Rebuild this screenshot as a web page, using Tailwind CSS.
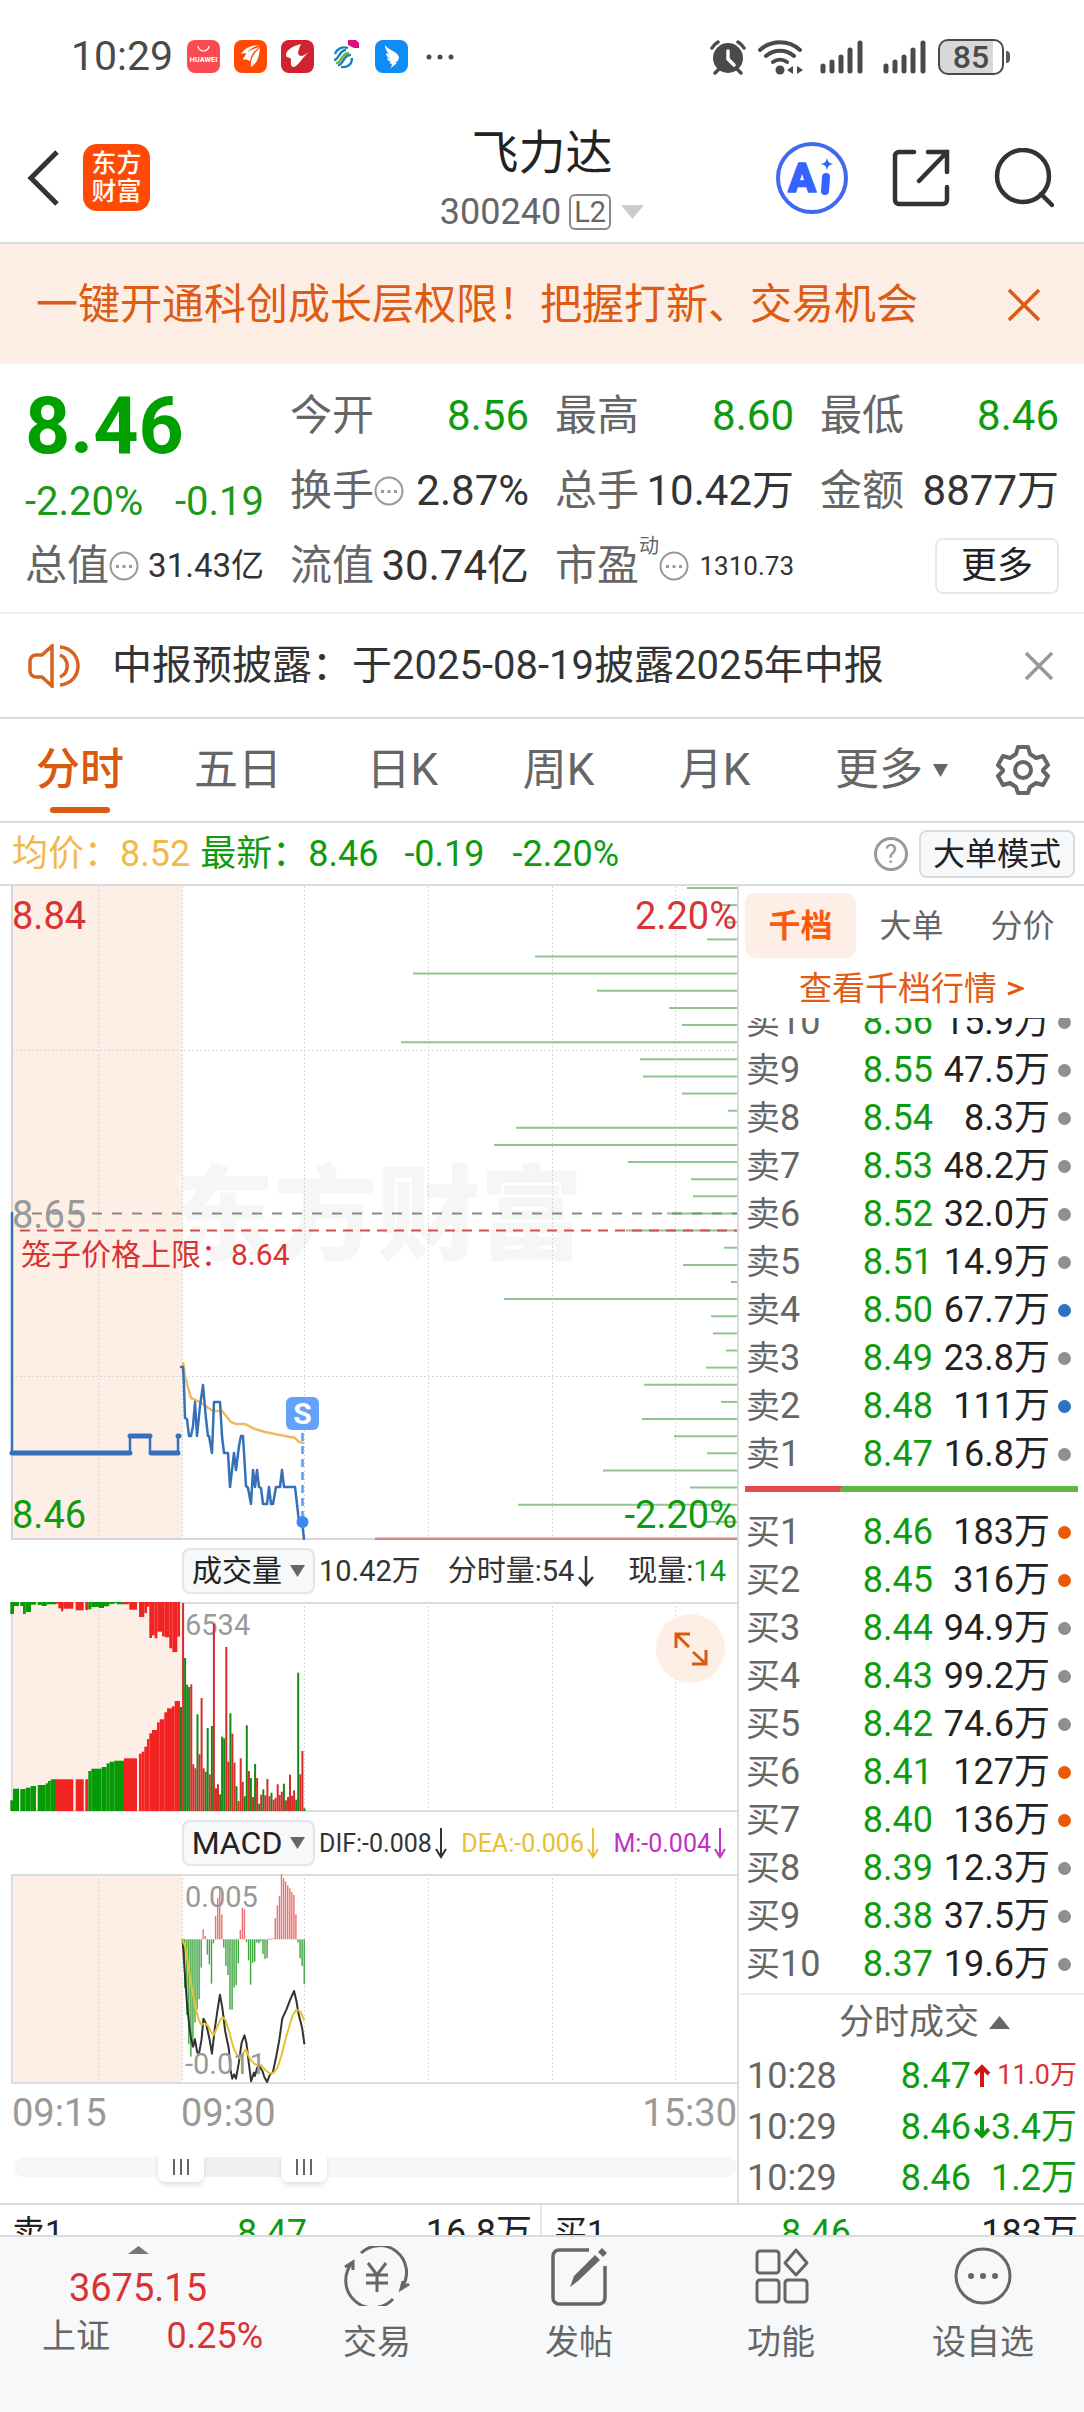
<!DOCTYPE html>
<html lang="zh-CN">
<head>
  <meta charset="UTF-8" />
  <meta name="viewport" content="width=device-width, initial-scale=1" />
  <title>飞力达 300240</title>
  <script src="https://cdn.jsdelivr.net/npm/@tailwindcss/browser@4"></script>
  <style>
    body { font-family: Roboto, 'Noto Sans CJK SC', sans-serif; }
  </style>
</head>
<body class="bg-white text-[#222] leading-none">

  <!-- Status bar -->
  <div class="h-[113px] pl-[71px] pr-[74px] flex items-center justify-between text-[#4a4a4a]">
    <div class="flex items-center gap-[14px]">
      <span class="text-[41px]">10:29</span>
      <svg class="w-[33px] h-[33px]" viewBox="0 0 33 33">
        <rect width="33" height="33" rx="8" fill="#fc4a52" />
        <path d="M11 6a5.500 5 0 0 0 11 0" fill="none" stroke="#fff" stroke-width="1.200" />
        <text x="16.500" y="22" font-size="7.500" font-weight="700" text-anchor="middle" fill="#fff">HUAWEI</text>
      </svg>
      <svg class="w-[33px] h-[33px]" viewBox="0 0 33 33">
        <rect width="33" height="33" rx="8" fill="#ff4a05" />
        <path d="M7 14c4-6 11-9 20-9-7 1-12 4-14 9-2-1-4-1-6 0zM9 20c2-7 8-11 17-13-5 3-9 7-10 14-2-1-5-2-7-1zM17 27c-1-8 3-14 9-19-1 6-1 14-9 19z" fill="#fff" />
      </svg>
      <svg class="w-[33px] h-[33px]" viewBox="0 0 33 33">
        <rect width="33" height="33" rx="8" fill="#d0222f" />
        <path d="M20 4C11 6 4 11 5 16c1 2 4 1 5 3 0 3-1 8 3 8 5-2 7-8 15-15-3 2-8 6-10 3-2-2 0-6 2-11z" fill="#fff" />
      </svg>
      <svg class="w-[33px] h-[33px]" viewBox="0 0 33 33">
        <g fill="none" stroke-width="2.400">
          <path d="M6 20c5 0 5-10 12-10M10 25c6 0 5-11 13-10" stroke="#1d7fc4" />
          <path d="M8 23c6 0 5-10 13-10" stroke="#6cb52d" />
          <path d="M7 14c2-5 7-8 13-6M24 18c0 6-4 10-11 9" stroke="#1d7fc4" />
        </g>
        <path d="M20 0h8l3 3v5h-5l-6-3z" fill="#d8127d" />
      </svg>
      <svg class="w-[33px] h-[33px]" viewBox="0 0 33 33">
        <rect width="33" height="33" rx="8" fill="#0f8df5" />
        <path d="M10 5c3 5 12 6 14 12 0 3-2 5-4 6h2l-6 5 1-4-3-1 2-1c-3-1-4-3-4-4l3 1c-3-2-4-4-4-6l3 1c-3-3-4-6-4-9z" fill="#fff" />
      </svg>
      <svg class="w-[28px] h-[6px] ml-[4px]" viewBox="0 0 28 6" fill="#4a4a4a"><circle cx="3" cy="3" r="2.500" /><circle cx="14" cy="3" r="2.500" /><circle cx="25" cy="3" r="2.500" /></svg>
    </div>
    <div class="flex items-center gap-[12px]">
      <svg class="w-[36px] h-[36px]" viewBox="0 0 36 36">
        <circle cx="18" cy="19" r="15" fill="#4a4a4a" />
        <path d="M2 9a16 16 0 0 1 6-6M34 9a16 16 0 0 0-6-6M5 34l4-4M31 34l-4-4" stroke="#4a4a4a" stroke-width="3.500" fill="none" stroke-linecap="round" />
        <path d="M18 12v8l6 6" stroke="#fff" stroke-width="3.500" fill="none" stroke-linecap="round" />
      </svg>
      <svg class="w-[46px] h-[36px]" viewBox="0 0 46 36">
        <g fill="none" stroke="#4a4a4a" stroke-width="4" stroke-linecap="round">
          <path d="M2 11a30 30 0 0 1 40 0M8 17a21 21 0 0 1 28 0M15 23a12 12 0 0 1 14 0" />
        </g>
        <circle cx="22" cy="31" r="4.500" fill="#4a4a4a" />
        <path d="M29 31l6-4v8zM45 31l-6-4v8z" fill="#4a4a4a" />
      </svg>
      <svg class="w-[43px] h-[34px] ml-[4px]" viewBox="0 0 43 34" stroke="#4a4a4a" stroke-width="5" stroke-linecap="round"><path d="M3 26v5M12 22v9M21 17v14M30 10v21M40 3v28" /></svg>
      <svg class="w-[43px] h-[34px] ml-[8px]" viewBox="0 0 43 34" stroke="#4a4a4a" stroke-width="5" stroke-linecap="round"><path d="M3 26v5M12 22v9M21 17v14M30 10v21M40 3v28" /></svg>
      <div class="flex items-center gap-[2px]">
        <span class="w-[66px] h-[36px] rounded-[10px] border-[2px] border-[#4a4a4a] bg-[linear-gradient(90deg,#d8d8d8_85%,#fff_85%)] flex items-center justify-center text-[32px] font-medium">85</span>
        <span class="w-[4px] h-[12px] rounded-r bg-[#5a5a5a]"></span>
      </div>
    </div>
  </div>

  <!-- Header -->
  <header class="relative h-[131px] border-b-2 border-[#d9dbdd] pl-[26px] pr-[30px] flex items-center justify-between">
    <div class="flex items-center gap-[24px]">
      <a href="#" aria-label="返回">
        <svg class="w-[33px] h-[58px]" viewBox="0 0 33 58" fill="none" stroke="#333" stroke-width="5"><path d="M31 3L5 29l26 26" /></svg>
      </a>
      <a href="#" class="w-[67px] h-[67px] rounded-[14px] bg-[#ff4a05] text-white text-[25px] leading-[28px] font-medium flex items-center justify-center text-center">东方<br />财富</a>
    </div>
    <div class="absolute inset-x-0 top-[10px] mx-auto w-[220px] flex flex-col items-center">
      <h1 class="text-[47px] leading-[60px] text-[#222]">飞力达</h1>
      <button class="mt-[10px] flex items-center text-[36px] leading-[38px] text-[#666]">
        300240
        <span class="ml-[8px] h-[36px] px-[3px] border-2 border-[#888] rounded-[6px] text-[29px] leading-[32px]">L2</span>
        <svg class="ml-[10px] w-[23px] h-[14px]" viewBox="0 0 23 14"><path d="M0 0h23L11.500 14z" fill="#ccc" /></svg>
      </button>
    </div>
    <div class="flex items-center gap-[44px]">
      <button aria-label="AI">
        <svg class="w-[72px] h-[72px]" viewBox="0 0 72 72">
          <circle cx="36" cy="36" r="34" fill="none" stroke="#4169ee" stroke-width="4" />
          <text x="12" y="50" font-size="41" font-weight="900" fill="#3463ff" stroke="#3463ff" stroke-width="1.500" stroke-linejoin="round">A</text>
          <path d="M50 35l-1 14" stroke="#3463ff" stroke-width="8" stroke-linecap="round" />
          <path d="M51 16c1 4 2 5 6 6-4 1-5 2-6 6-1-4-2-5-6-6 4-1 5-2 6-6z" fill="#3463ff" />
        </svg>
      </button>
      <button aria-label="分享">
        <svg class="w-[58px] h-[58px]" viewBox="0 0 58 58" fill="none" stroke="#333" stroke-width="4.500" stroke-linecap="round"><path d="M22 3H7a4 4 0 0 0-4 4v44a4 4 0 0 0 4 4h44a4 4 0 0 0 4-4V38M36 3h19v20M55 3L27 32" /></svg>
      </button>
      <button aria-label="搜索">
        <svg class="w-[60px] h-[60px]" viewBox="0 0 60 60" fill="none" stroke="#333" stroke-width="4.500" stroke-linecap="round"><circle cx="29" cy="28" r="26" /><path d="M47 46l11 11" /></svg>
      </button>
    </div>
  </header>

  <!-- Promo banner -->
  <div class="h-[120px] pt-[2px] bg-[#fceee5] pl-[36px] pr-[43px] flex items-center justify-between text-[#dd5b12]">
    <a href="#" class="text-[42px]">一键开通科创成长层权限！把握打新、交易机会</a>
    <button aria-label="关闭"><svg class="w-[34px] h-[34px]" viewBox="0 0 34 34" stroke="#dd5b12" stroke-width="3.500"><path d="M2 2l30 30M32 2L2 32" /></svg></button>
  </div>

  <!-- Quote -->
  <section class="h-[250px] pt-[14px] px-[25px] border-b-2 border-[#ededee] grid grid-cols-4 auto-rows-[75px] gap-x-[26px] text-[42px] text-[#666]">
    <div class="row-span-2 text-[#00a000]">
      <div class="h-[96px] flex items-center text-[79px] font-bold">8.46</div>
      <div class="h-[56px] flex items-center justify-between text-[40px] text-[#1a991a]"><span>-2.20%</span><span>-0.19</span></div>
    </div>
    <div class="flex items-center justify-between">今开<span class="text-[#0f9b0f]">8.56</span></div>
    <div class="flex items-center justify-between">最高<span class="text-[#0f9b0f]">8.60</span></div>
    <div class="flex items-center justify-between">最低<span class="text-[#0f9b0f]">8.46</span></div>
    <div class="flex items-center">换手
      <svg class="w-[30px] h-[30px]" viewBox="0 0 30 30"><circle cx="15" cy="15" r="13.500" fill="none" stroke="#999" stroke-width="2" /><path d="M7 14h3v3H7zM13.500 14h3v3h-3zM20 14h3v3h-3z" fill="#999" /></svg>
      <span class="ml-auto text-[#333]">2.87%</span></div>
    <div class="flex items-center justify-between">总手<span class="text-[#333]">10.42万</span></div>
    <div class="flex items-center justify-between">金额<span class="text-[#333]">8877万</span></div>
    <div class="flex items-center">总值
      <svg class="w-[30px] h-[30px]" viewBox="0 0 30 30"><circle cx="15" cy="15" r="13.500" fill="none" stroke="#999" stroke-width="2" /><path d="M7 14h3v3H7zM13.500 14h3v3h-3zM20 14h3v3h-3z" fill="#999" /></svg>
      <span class="ml-auto text-[33px] text-[#333]">31.43亿</span></div>
    <div class="flex items-center justify-between">流值<span class="text-[#333]">30.74亿</span></div>
    <div class="flex items-center">市盈<span class="self-start mt-[8px] text-[20px]">动</span>
      <svg class="w-[30px] h-[30px]" viewBox="0 0 30 30"><circle cx="15" cy="15" r="13.500" fill="none" stroke="#999" stroke-width="2" /><path d="M7 14h3v3H7zM13.500 14h3v3h-3zM20 14h3v3h-3z" fill="#999" /></svg>
      <span class="ml-auto text-[26px] text-[#333]">1310.73</span></div>
    <div class="flex items-center justify-end">
      <button class="w-[124px] h-[56px] border-2 border-[#e8e8ea] rounded-[8px] text-[36px] text-[#222]">更多</button>
    </div>
  </section>

  <!-- Notice -->
  <div class="h-[105px] border-b-2 border-[#d9dbdd] pl-[28px] pr-[30px] flex items-center text-[40px] text-[#333]">
    <svg class="w-[53px] h-[44px]" viewBox="0 0 53 44" fill="none" stroke="#d8631f" stroke-width="3.500"><path d="M2 17a6 6 0 0 1 6-6h6L24 2v40L14 33H8a6 6 0 0 1-6-6zM32 11a12 12 0 0 1 0 22M32 3c11 1 18 9 18 19s-7 18-18 19" /></svg>
    <a href="#" class="ml-[31px]">中报预披露：于2025-08-19披露2025年中报</a>
    <button aria-label="关闭" class="ml-auto"><svg class="w-[30px] h-[30px]" viewBox="0 0 30 30" stroke="#999" stroke-width="3.500"><path d="M2 2l26 26M28 2L2 28" /></svg></button>
  </div>

  <!-- Period tabs -->
  <nav class="h-[104px] border-b-2 border-[#d9dbdd] pl-[36px] pr-[34px] flex items-center text-[44px] text-[#666]">
    <button class="relative h-full text-[#d9590f] font-medium">分时<span class="absolute bottom-[8px] left-[14px] w-[60px] h-[6px] rounded-full bg-[#d9590f]"></span></button>
    <div class="flex-1 ml-[70px] flex items-center justify-between">
      <button>五日</button>
      <button>日K</button>
      <button>周K</button>
      <button>月K</button>
      <button class="flex items-center">更多<svg class="ml-[10px] w-[15px] h-[13px]" viewBox="0 0 15 13"><path d="M0 0h15L7.500 13z" fill="#666" /></svg></button>
    </div>
    <button aria-label="设置" class="ml-[48px]">
      <svg class="w-[54px] h-[52px]" viewBox="0 0 54 52" fill="none" stroke="#666" stroke-width="4" stroke-linejoin="round"><path d="M22 3h10l2 7 6 4 7-2 5 9-5 5 0 1 5 5-5 9-7-2-6 4-2 6H22l-2-6-6-4-7 2-5-9 5-5 0-1-5-5 5-9 7 2 6-4z" /><circle cx="27" cy="26" r="8" /></svg>
    </button>
  </nav>

  <!-- Latest price line -->
  <div class="h-[63px] border-b-2 border-[#d9dbdd] pl-[12px] pr-[9px] flex items-center text-[36px] text-[#0f9b0f]">
    <span class="text-[#f0b94c]">均价：8.52</span>
    <span class="ml-[10px]">最新：8.46</span>
    <span class="ml-[26px]">-0.19</span>
    <span class="ml-[28px]">-2.20%</span>
    <button aria-label="帮助" class="ml-auto w-[34px] h-[34px] rounded-full border-[3px] border-[#999] text-[26px] leading-[28px] text-[#999]">?</button>
    <button class="ml-[11px] w-[156px] h-[48px] rounded-[8px] border-2 border-[#d9dbdd] bg-[#f7f8fa] text-[32px] text-[#222]">大单模式</button>
  </div>

  <main class="grid grid-cols-[minmax(0,1fr)_345px] border-b-2 border-[#d9dbdd]">
    <!-- Charts -->
    <div class="border-r-2 border-[#d9dbdd]">
      <svg class="block w-full h-auto" viewBox="0 0 737 654" font-size="38">
        <rect x="12" width="170" height="653" fill="#fdeee6" />
        <text x="171" y="366" font-size="103" font-weight="900" fill="#f6f6f6">东方财富</text>
        <g stroke="#d8d8d8" stroke-width="1" stroke-dasharray="2 2">
          <path d="M98.500 0v653M182.500 0v653M304.500 0v653M428.500 0v653M552.500 0v653M675.500 0v653M12 164.500h725M12 490.500h725" />
        </g>
        <path d="M12 0v653h363" fill="none" stroke="#d6d6d6" stroke-width="2" />
        <path d="M375 653h362" stroke="#cf8783" stroke-width="3" />
        <g id="depthBars" stroke="#90c590" stroke-width="2"></g>
        <path d="M32 327.500h705" stroke="#888" stroke-width="2" stroke-dasharray="10 10" />
        <path d="M20 344.500h717" stroke="#d05050" stroke-width="2" stroke-dasharray="10 7" />
        <text x="12" y="43" fill="#d93333">8.84</text>
        <text x="737" y="43" fill="#d93333" text-anchor="end">2.20%</text>
        <text x="12" y="342" fill="#999">8.65</text>
        <text x="21" y="379" font-size="30" fill="#d93333">笼子价格上限：8.64</text>
        <text x="12" y="642" fill="#0f9b0f">8.46</text>
        <text x="737" y="642" fill="#0f9b0f" text-anchor="end">-2.20%</text>
        <polyline fill="none" stroke="#edbb62" stroke-width="2.500" points="183,476 185,490 191,512 200,516 210,523 213,525 222,525 231,536 236,538 245,538 255,543 265,546 280,549 295,552 299,556 304,557" />
        <g fill="none" stroke="#3571b8" stroke-linejoin="round" stroke-linecap="round">
          <path d="M12 327v240M130 567v-17M150 550v17M178 567v-17" stroke-width="2.500" />
          <path d="M12 567h118M130 550h20M151 567h27M178 550h1" stroke-width="5" />
          <polyline stroke-width="2.500" points="181,481 183,481 184,500 185,532 187,533 189,550 191,550 193,540 195,516 197,550 200,520 203,499 206,533 208,550 209,550 212,567 214,516 220,516 222,550 224,567 228,567 230,601 234,567 236,584 239,560 241,550 243,550 246,600 248,602 251,618 253,584 255,601 257,584 259,601 261,602 263,618 267,618 269,601 271,618 273,618 276,601 280,601 282,584 284,601 295,601 297,618 299,636 302,636 304,653" />
        </g>
        <path d="M302.500 547v86" stroke="#5b9cf0" stroke-width="2.500" stroke-dasharray="8 5" />
        <circle cx="302.500" cy="636" r="6" fill="#3d87f5" />
        <rect x="286" y="511" width="33" height="33" rx="6" fill="#64a1fa" />
        <text x="302.500" y="538" font-size="30" font-weight="700" fill="#fff" text-anchor="middle">S</text>
      </svg>

      <div class="h-[62px] pl-[182px] pr-[11px] flex items-center justify-between text-[29px] text-[#333]">
        <button class="w-[133px] h-[46px] shrink-0 rounded-[8px] border-2 border-[#e3e5e8] bg-[#f7f8fa] flex items-center justify-center gap-[8px] text-[30px] text-[#222]">成交量<svg class="w-[15px] h-[12px]" viewBox="0 0 15 12"><path d="M0 0h15L7.500 12z" fill="#666" /></svg></button>
        <span class="ml-[4px]">10.42万</span>
        <span class="ml-auto flex items-center gap-[4px]">分时量:54<svg class="w-[16px] h-[32px]" viewBox="0 0 16 32" fill="none" stroke="#333" stroke-width="2.500"><path d="M8 1v29M1 22l7 8 7-8" /></svg></span>
        <span class="ml-[34px]">现量:<span class="text-[#0f9b0f]">14</span></span>
      </div>

      <div class="relative">
        <svg class="block w-full h-auto" viewBox="0 0 737 210">
          <rect x="12" width="170" height="209" fill="#fdeee6" />
          <path d="M98.500 0v209M182.500 0v209M304.500 0v209M428.500 0v209M552.500 0v209M675.500 0v209" stroke="#d8d8d8" stroke-dasharray="2 2" />
          <path d="M12 1h725M12 209h725M12 0v209" stroke="#dcdcdc" stroke-width="2" fill="none" />
          <text x="185" y="33" font-size="29" fill="#999">6534</text>
          <g id="volumeBars"></g>
        </svg>
        <button aria-label="全屏" class="absolute top-[12px] right-[12px] w-[69px] h-[69px] rounded-full bg-[#fdeee6] flex items-center justify-center">
          <svg class="w-[34px] h-[34px]" viewBox="0 0 34 34" fill="none" stroke="#d9590f" stroke-width="3"><path d="M2 16V2h14M2 2l13 13M32 18v14H18M32 32L19 20" /></svg>
        </button>
      </div>

      <div class="h-[62px] pl-[182px] pr-[11px] flex items-center text-[25px] text-[#333]">
        <button class="w-[133px] h-[46px] shrink-0 rounded-[8px] border-2 border-[#e3e5e8] bg-[#f7f8fa] flex items-center justify-center gap-[8px] text-[32px] text-[#222]">MACD<svg class="w-[15px] h-[12px]" viewBox="0 0 15 12"><path d="M0 0h15L7.500 12z" fill="#666" /></svg></button>
        <div class="flex-1 ml-[4px] flex items-center justify-between">
          <span class="flex items-center gap-[3px]">DIF:-0.008<svg class="w-[12px] h-[32px]" viewBox="0 0 12 32" fill="none" stroke="#333" stroke-width="2"><path d="M6 1v29M1 22l5 8 5-8" /></svg></span>
          <span class="flex items-center gap-[3px] text-[#e8c030]">DEA:-0.006<svg class="w-[12px] h-[32px]" viewBox="0 0 12 32" fill="none" stroke="#e8c030" stroke-width="2"><path d="M6 1v29M1 22l5 8 5-8" /></svg></span>
          <span class="flex items-center gap-[3px] text-[#c22fc4]">M:-0.004<svg class="w-[12px] h-[32px]" viewBox="0 0 12 32" fill="none" stroke="#c22fc4" stroke-width="2"><path d="M6 1v29M1 22l5 8 5-8" /></svg></span>
        </div>
      </div>

      <svg class="block w-full h-auto" viewBox="0 0 737 210" font-size="29">
        <rect x="12" width="170" height="209" fill="#fdeee6" />
        <path d="M98.500 0v209M182.500 0v209M304.500 0v209M428.500 0v209M552.500 0v209M675.500 0v209" stroke="#d8d8d8" stroke-dasharray="2 2" />
        <path d="M12 1h725M12 209h725M12 0v209" stroke="#dcdcdc" stroke-width="2" fill="none" />
        <g id="macdBars"></g>
        <g transform="scale(.472 .3333) translate(0 -194)" fill="none" stroke-width="2" stroke-linejoin="round">
          <polyline vector-effect="non-scaling-stroke" stroke="#333" points="387,390 391,480 396,580 401,650 405,690 409,712 413,690 418,730 422,730 427,690 431,628 437,645 444,690 449,733 455,660 460,610 466,556 471,595 477,665 485,720 488,780 492,808 496,795 500,808 506,760 512,700 518,678 522,700 527,760 532,816 538,790 540,800 545,775 550,772 556,785 560,803 566,818 572,795 578,790 584,750 592,690 598,628 607,600 615,570 623,545 628,575 632,610 640,655 645,705" />
          <polyline vector-effect="non-scaling-stroke" stroke="#e8c030" points="385,388 392,410 400,480 408,550 416,605 422,635 427,646 433,642 440,648 446,665 452,678 460,655 467,630 472,624 478,633 486,670 494,712 502,738 510,748 516,730 521,720 528,745 538,762 545,768 554,768 562,782 572,793 580,790 588,775 596,740 605,690 612,655 620,618 628,601 636,606 645,634" />
        </g>
        <text x="185" y="33" fill="#999">0.005</text>
        <text x="185" y="200" fill="#999">-0.011</text>
      </svg>

      <div class="h-[58px] grid grid-cols-[169px_1fr_auto] items-center pl-[12px] text-[38px] text-[#999]">
        <span>09:15</span><span>09:30</span><span>15:30</span>
      </div>

      <!-- Time range -->
      <div class="relative ml-[14px] mt-[10px] mb-[21px] h-[30px] flex items-center">
        <div class="w-full h-[20px] rounded-full bg-[#f7f7f9]"></div>
        <div class="absolute left-[23%] w-[17%] h-[20px] bg-[#f0f0f2]"></div>
        <input type="range" aria-label="开始时间" min="0" max="1000" value="213" class="absolute inset-0 w-full h-[30px] appearance-none bg-transparent pointer-events-none [&::-webkit-slider-thumb]:appearance-none [&::-webkit-slider-thumb]:pointer-events-auto [&::-webkit-slider-thumb]:w-[46px] [&::-webkit-slider-thumb]:h-[30px] [&::-webkit-slider-thumb]:rounded-[7px] [&::-webkit-slider-thumb]:shadow-md [&::-webkit-slider-thumb]:bg-white [&::-webkit-slider-thumb]:bg-[linear-gradient(90deg,#666_2px,transparent_2px,transparent_7px,#666_7px,#666_9px,transparent_9px,transparent_14px,#666_14px)] [&::-webkit-slider-thumb]:bg-[length:16px_16px] [&::-webkit-slider-thumb]:bg-center [&::-webkit-slider-thumb]:bg-no-repeat" />
        <input type="range" aria-label="结束时间" min="0" max="1000" value="395" class="absolute inset-0 w-full h-[30px] appearance-none bg-transparent pointer-events-none [&::-webkit-slider-thumb]:appearance-none [&::-webkit-slider-thumb]:pointer-events-auto [&::-webkit-slider-thumb]:w-[46px] [&::-webkit-slider-thumb]:h-[30px] [&::-webkit-slider-thumb]:rounded-[7px] [&::-webkit-slider-thumb]:shadow-md [&::-webkit-slider-thumb]:bg-white [&::-webkit-slider-thumb]:bg-[linear-gradient(90deg,#666_2px,transparent_2px,transparent_7px,#666_7px,#666_9px,transparent_9px,transparent_14px,#666_14px)] [&::-webkit-slider-thumb]:bg-[length:16px_16px] [&::-webkit-slider-thumb]:bg-center [&::-webkit-slider-thumb]:bg-no-repeat" />
      </div>
    </div>

    <!-- Order book -->
    <aside class="pt-[7px] text-[36px]">
      <div class="px-[6px] grid grid-cols-3 text-[32px] text-[#666]">
        <button class="h-[65px] rounded-[10px] bg-[#fdeee6] font-bold text-[#fa5a0a]">千档</button>
        <button>大单</button>
        <button>分价</button>
      </div>
      <a href="#" class="h-[60px] flex items-center justify-center gap-[10px] text-[33px] text-[#e35b12]">查看千档行情<svg class="w-[17px] h-[15px]" viewBox="0 0 17 15" fill="none" stroke="#e35b12" stroke-width="3"><path d="M1 2l14 5.500L1 13" /></svg></a>
      <div class="h-[460px] overflow-hidden flex items-end">
        <table class="w-full">
          <tbody id="asks"></tbody>
        </table>
      </div>
      <div class="mx-[6px] my-[8px] h-[6px] bg-[linear-gradient(125deg,#e24c4c_29%,#5fb548_29%)]"></div>
      <div class="pt-[8px] pb-[5px] border-b-2 border-[#ededee]">
        <table class="w-full">
          <tbody id="bids"></tbody>
        </table>
      </div>
      <button class="w-full h-[55px] pl-[26px] flex items-center justify-center gap-[10px] text-[35px] text-[#666]">分时成交<svg class="w-[21px] h-[13px]" viewBox="0 0 21 13"><path d="M0 13h21L10.500 0z" fill="#666" /></svg></button>
      <table class="w-full whitespace-nowrap">
        <tbody>
          <tr class="h-[51px]"><td class="pl-[8px] text-[#666]">10:28</td><td class="text-right text-[#0f9b0f]">8.47</td><td class="w-[20px] pl-[3px]"><svg class="w-[16px] h-[24px]" viewBox="0 0 16 24" fill="none" stroke="#d01515" stroke-width="4"><path d="M8 23V3M1 10l7-7 7 7" /></svg></td><td class="w-[92px] pr-[7px] text-right text-[27px] text-[#d93333]">11.0万</td></tr>
          <tr class="h-[51px]"><td class="pl-[8px] text-[#666]">10:29</td><td class="text-right text-[#0f9b0f]">8.46</td><td class="pl-[3px]"><svg class="w-[16px] h-[24px]" viewBox="0 0 16 24" fill="none" stroke="#0f9b0f" stroke-width="4"><path d="M8 1v20M1 14l7 7 7-7" /></svg></td><td class="pr-[7px] text-right text-[#0f9b0f]">3.4万</td></tr>
          <tr class="h-[51px]"><td class="pl-[8px] text-[#666]">10:29</td><td class="text-right text-[#0f9b0f]">8.46</td><td></td><td class="pr-[7px] text-right text-[#0f9b0f]">1.2万</td></tr>
        </tbody>
      </table>
    </aside>
  </main>

  <div class="h-[30px] overflow-hidden grid grid-cols-2 text-[36px] leading-[56px]">
    <div class="pl-[12px] pr-[8px] border-r-2 border-[#e3e5e8] flex justify-between"><span class="w-[120px] text-[33px]">卖1</span><span class="text-[#0f9b0f]">8.47</span><span class="w-[120px] text-right">16.8万</span></div>
    <div class="pl-[12px] pr-[6px] flex justify-between"><span class="w-[120px] text-[33px]">买1</span><span class="text-[#0f9b0f]">8.46</span><span class="w-[120px] text-right">183万</span></div>
  </div>

  <!-- Bottom bar -->
  <nav class="h-[177px] border-t-2 border-[#d9dbdd] bg-[#f7f8fa] flex text-[34px] text-[#666]">
    <a href="#" class="w-[276px] pt-[9px] flex flex-col items-center text-[#d93333]">
      <svg class="w-[21px] h-[8px]" viewBox="0 0 21 8"><path d="M0 8h21L10.500 0z" fill="#777" /></svg>
      <span class="mt-[14px] text-[38px] leading-[40px]">3675.15</span>
      <span class="mt-[6px] w-full pl-[42px] pr-[13px] flex items-center justify-between leading-[44px]"><span class="text-[#666]">上证</span><span class="text-[36px]">0.25%</span></span>
    </a>
    <a href="#" class="flex-1 pt-[9px] flex flex-col items-center gap-[19px]">
      <svg class="w-[66px] h-[60px]" viewBox="0 0 66 60" fill="none" stroke="#666" stroke-width="3">
        <path d="M17 7a27 27 0 0 1 42 33M49 53A27 27 0 0 1 9 16M1 21l8-5v8M65 38l-8 5 2-8" /><path d="M24 17l9 12 9-12M33 29v17M22 29h22M22 37h22" />
      </svg>交易</a>
    <a href="#" class="flex-1 pt-[9px] flex flex-col items-center gap-[19px]">
      <svg class="w-[60px] h-[60px]" viewBox="0 0 60 60" fill="none" stroke="#666" stroke-width="3.500">
        <path d="M40 4H10a6 6 0 0 0-6 6v42a6 6 0 0 0 6 6h40a6 6 0 0 0 6-6V20" /><path d="M21 41l4-11L46 9l5 5-22 21z" fill="#666" stroke="none" /><path d="M49 6l4-4 5 5-4 4z" fill="#666" stroke="none" />
      </svg>发帖</a>
    <a href="#" class="flex-1 pt-[9px] flex flex-col items-center gap-[19px]">
      <svg class="w-[56px] h-[60px]" viewBox="0 0 56 60" fill="none" stroke="#666" stroke-width="3">
        <rect x="4" y="5" width="22" height="22" rx="3" /><rect x="4" y="34" width="22" height="22" rx="3" /><rect x="32" y="34" width="22" height="22" rx="3" /><path d="M43 4l11 13-11 12-11-12z" stroke-linejoin="round" />
      </svg>功能</a>
    <a href="#" class="flex-1 pt-[9px] flex flex-col items-center gap-[19px]">
      <svg class="w-[60px] h-[60px]" viewBox="0 0 60 60"><circle cx="30" cy="30" r="27" fill="none" stroke="#666" stroke-width="3" /><circle cx="18" cy="30" r="3" fill="#666" /><circle cx="30" cy="30" r="3" fill="#666" /><circle cx="42" cy="30" r="3" fill="#666" /></svg>设自选</a>
  </nav>

  <script>
    const GREEN = '#069a06';
    const RED = '#f22323';

    // Order book rows: [label, price, amount, dot]
    const dots = { g: 'bg-[#8e8e93]', b: 'bg-[#2f72bf]', o: 'bg-[#e85a05]' };
    const asks = [['卖10', '8.56', '15.9万', 'g'], ['卖9', '8.55', '47.5万', 'g'], ['卖8', '8.54', '8.3万', 'g'], ['卖7', '8.53', '48.2万', 'g'], ['卖6', '8.52', '32.0万', 'g'], ['卖5', '8.51', '14.9万', 'g'], ['卖4', '8.50', '67.7万', 'b'], ['卖3', '8.49', '23.8万', 'g'], ['卖2', '8.48', '111万', 'b'], ['卖1', '8.47', '16.8万', 'g']];
    const bids = [['买1', '8.46', '183万', 'o'], ['买2', '8.45', '316万', 'o'], ['买3', '8.44', '94.9万', 'g'], ['买4', '8.43', '99.2万', 'g'], ['买5', '8.42', '74.6万', 'g'], ['买6', '8.41', '127万', 'o'], ['买7', '8.40', '136万', 'o'], ['买8', '8.39', '12.3万', 'g'], ['买9', '8.38', '37.5万', 'g'], ['买10', '8.37', '19.6万', 'g']];

    function renderBook(id, rows) {
      document.getElementById(id).innerHTML = rows.map(r => `
        <tr class="h-[48px]">
          <td class="pl-[7px] text-[#666]"><span class="text-[34px]">${r[0][0]}</span>${r[0].slice(1)}</td>
          <td class="text-right text-[#0f9b0f]">${r[1]}</td>
          <td class="w-[117px] text-right text-[#222]">${r[2]}</td>
          <td class="w-[34px] pl-[8px]"><span class="block w-[13px] h-[13px] rounded-full ${dots[r[3]]}"></span></td>
        </tr>`).join('');
    }
    renderBook('asks', asks);
    renderBook('bids', bids);

    // Depth lines, left end of each one
    const depth = [687, 722, 727, 707, 535, 413, 597, 669, 682, 401, 640, 643, 682, 728, 516, 494, 628, 691, 693, 667, 626, 724, 683, 731, 504, 711, 713, 726, 706, 644, 721, 642, 674, 707, 603, 690, 518, 705];
    document.getElementById('depthBars').innerHTML = depth.map((x, i) => `<path d="M${x} ${(2 + i * 17.13).toFixed(1)}H737" />`).join('');

    // Auction volume: [from, to, height, colour], in thirds of a unit
    const auction = [[31, 39, 32, 'g'], [39, 57, 67, 'g'], [61, 77, 66, 'g'], [77, 92, 70, 'g'], [92, 108, 75, 'g'], [113, 137, 78, 'g'], [137, 144, 83, 'g'], [144, 152, 90, 'g'], [152, 168, 95, 'g'], [168, 220, 95, 'r'], [227, 251, 95, 'r'], [256, 265, 95, 'r'], [265, 274, 120, 'g'], [274, 305, 127, 'g'], [305, 320, 132, 'g'], [320, 329, 143, 'g'], [329, 343, 148, 'g'], [343, 372, 151, 'g'], [372, 411, 158, 'r'], [417, 425, 172, 'r'], [425, 433, 178, 'r'], [433, 441, 193, 'r'], [441, 448, 216, 'r'], [448, 456, 233, 'r'], [456, 471, 243, 'r'], [471, 479, 266, 'r'], [479, 493, 275, 'r'], [493, 501, 296, 'r'], [501, 516, 308, 'r'], [516, 524, 314, 'r'], [524, 540, 330, 'r']];
    const unmatched = [[31, 42, 36, 'g'], [42, 57, 12, 'g'], [61, 69, 12, 'g'], [69, 77, 36, 'g'], [77, 93, 30, 'g'], [93, 108, 8, 'g'], [113, 125, 9, 'g'], [125, 140, 12, 'g'], [140, 168, 7, 'g'], [168, 175, 5, 'r'], [175, 183, 19, 'r'], [183, 190, 28, 'r'], [190, 220, 20, 'r'], [227, 251, 25, 'r'], [256, 265, 24, 'r'], [265, 274, 22, 'g'], [274, 297, 15, 'g'], [297, 312, 18, 'g'], [312, 328, 13, 'g'], [328, 343, 6, 'g'], [343, 350, 3, 'g'], [350, 372, 7, 'g'], [372, 388, 7, 'r'], [388, 411, 23, 'r'], [417, 433, 45, 'r'], [433, 441, 33, 'r'], [441, 448, 14, 'r'], [448, 456, 108, 'r'], [456, 464, 100, 'r'], [464, 472, 109, 'r'], [472, 486, 89, 'r'], [486, 494, 103, 'r'], [494, 508, 106, 'r'], [508, 517, 139, 'r'], [517, 532, 150, 'r'], [532, 540, 104, 'r']];
    // Minute volume, negative = falling
    const volume = [-312, 624, -459, -379, -372, 380, 140, 128, -290, 170, 339, 128, -118, -249, 110, -255, 562, 68, 80, -50, -223, -218, 492, 148, -293, 232, 145, -74, 30, 158, 88, -44, -257, 120, -99, 42, -141, 99, -22, 49, -65, 47, 96, 44, -55, 34, 40, 80, 48, 58, -82, 32, 42, 109, 46, 62, -34, -415, 110, 180, -8];

    const color = c => c === 'g' ? GREEN : RED;
    const rect = (x, y, w, h, fill) => `<rect x="${x.toFixed(1)}" y="${y.toFixed(1)}" width="${w.toFixed(1)}" height="${h.toFixed(1)}" fill="${fill}" />`;
    document.getElementById('volumeBars').innerHTML =
      auction.map(([a, b, h, c]) => rect(a / 3, 209 - h / 3, (b - a) / 3, h / 3, color(c))).join('') +
      unmatched.map(([a, b, h, c]) => rect(a / 3, 0, (b - a) / 3, h / 3, color(c))).join('') +
      volume.map((v, i) => rect(180 + i * 2.057, 209 - Math.abs(v) / 3, 2, Math.abs(v) / 3, v < 0 ? '#148a14' : '#d92b2b')).join('');

    const macd = [-145, -227, -315, -352, -310, -250, -210, -180, -85, 30, 10, -46, -75, -133, -12, 70, 124, 155, 74, -25, -80, -107, -211, -211, -145, -138, -72, 28, 95, 90, -8, -63, -136, -71, -67, -10, -12, -7, -44, -59, -56, 3, -2, 3, 63, 102, 130, 195, 183, 173, 162, 153, 142, 133, 75, -10, -57, -80, -135];
    document.getElementById('macdBars').innerHTML = macd.map((v, i) =>
      rect(184 + i * 2.06, v < 0 ? 65.3 : 65.3 - v / 3, 1.4, Math.abs(v) / 3, v < 0 ? '#3fa53f' : '#ee6f6f')).join('');
  </script>
</body>
</html>
